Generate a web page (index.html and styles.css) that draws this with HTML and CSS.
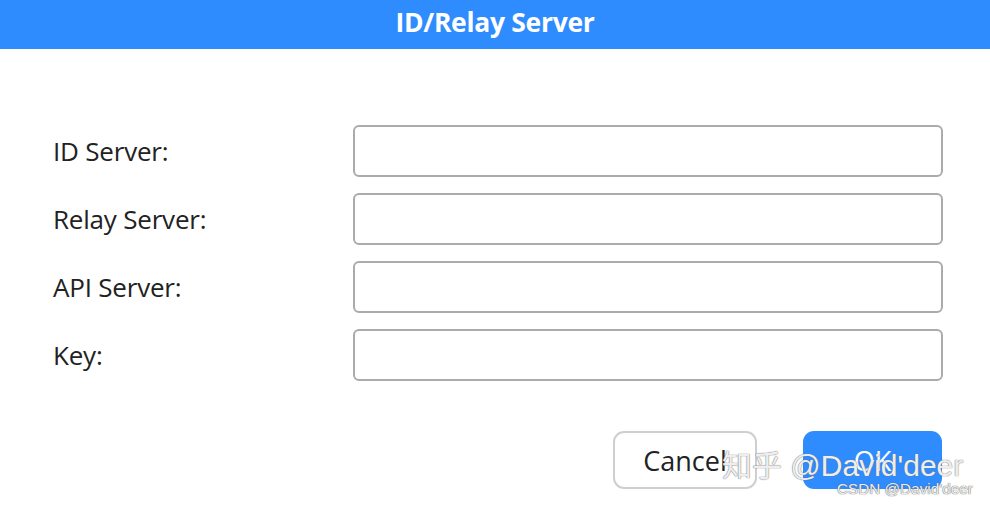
FILE: index.html
```html
<!DOCTYPE html>
<html lang="en">
<head>
<meta charset="utf-8">
<title>ID/Relay Server</title>
<link rel="stylesheet" href="styles.css">
</head>
<body>
<div class="dialog">
  <header class="titlebar">ID/Relay Server</header>
  <main class="content">
    <div class="form">
      <label class="label" for="id-server">ID Server:</label>
      <input class="field" id="id-server" type="text">
      <label class="label" for="relay-server">Relay Server:</label>
      <input class="field" id="relay-server" type="text">
      <label class="label" for="api-server">API Server:</label>
      <input class="field" id="api-server" type="text">
      <label class="label" for="key">Key:</label>
      <input class="field" id="key" type="text">
    </div>
    <div class="actions">
      <button class="btn btn-cancel" type="button">Cancel</button>
      <button class="btn btn-ok" type="button">OK</button>
    </div>
  </main>
  <div class="watermark">知乎 @David'deer</div>
  <div class="watermark-small">CSDN @David'deer</div>
</div>
</body>
</html>
```
FILE: styles.css
```css
html, body {
  margin: 0;
  padding: 0;
  background: #ffffff;
}
body {
  font-family: "Open Sans", "Noto Sans", sans-serif;
  color: #222;
}
.dialog {
  position: relative;
  width: 990px;
  height: 506px;
  overflow: hidden;
}
.titlebar {
  height: 49px;
  background: #2f8cff;
  color: #ffffff;
  font-weight: 700;
  font-size: 26.5px;
  letter-spacing: -0.3px;
  display: flex;
  align-items: center;
  justify-content: center;
  padding-bottom: 5px;
  box-sizing: border-box;
}
.content {
  padding: 76px 47px 0 53px;
}
.form {
  display: grid;
  grid-template-columns: 300px 1fr;
  row-gap: 16px;
  align-items: center;
}
.label {
  font-size: 26px;
  color: #222;
  letter-spacing: -0.2px;
}
.field {
  box-sizing: border-box;
  height: 52px;
  width: 100%;
  border: 2px solid #ababab;
  border-radius: 6px;
  background: #fff;
  outline: none;
  margin: 0;
}
.actions {
  display: flex;
  justify-content: flex-end;
  gap: 46px;
  margin-top: 50px;
  padding-right: 1px;
}
.btn {
  box-sizing: border-box;
  height: 58px;
  border-radius: 11px;
  font-family: "Open Sans", "Noto Sans", sans-serif;
  font-size: 27px;
  padding: 0;
  margin: 0;
}
.btn-cancel {
  width: 144px;
  background: #fff;
  border: 2px solid #cfcfcf;
  color: #222;
}
.btn-ok {
  width: 139px;
  background: #2f8cff;
  border: none;
  color: #fff;
}
.watermark {
  position: absolute;
  left: 722px;
  top: 441px;
  font-family: "Liberation Sans", "Noto Sans CJK SC", sans-serif;
  font-size: 30px;
  color: rgba(255, 255, 255, 0.9);
  text-shadow: 0 0 1px #777, 0 0 1px #777;
  white-space: nowrap;
}
.watermark-small {
  position: absolute;
  left: 837px;
  top: 480px;
  font-family: "Liberation Sans", "Noto Sans CJK SC", sans-serif;
  font-size: 15.3px;
  color: rgba(255, 255, 255, 0.9);
  text-shadow: 0 0 1px #666, 0 0 1px #666;
  white-space: nowrap;
}
```
